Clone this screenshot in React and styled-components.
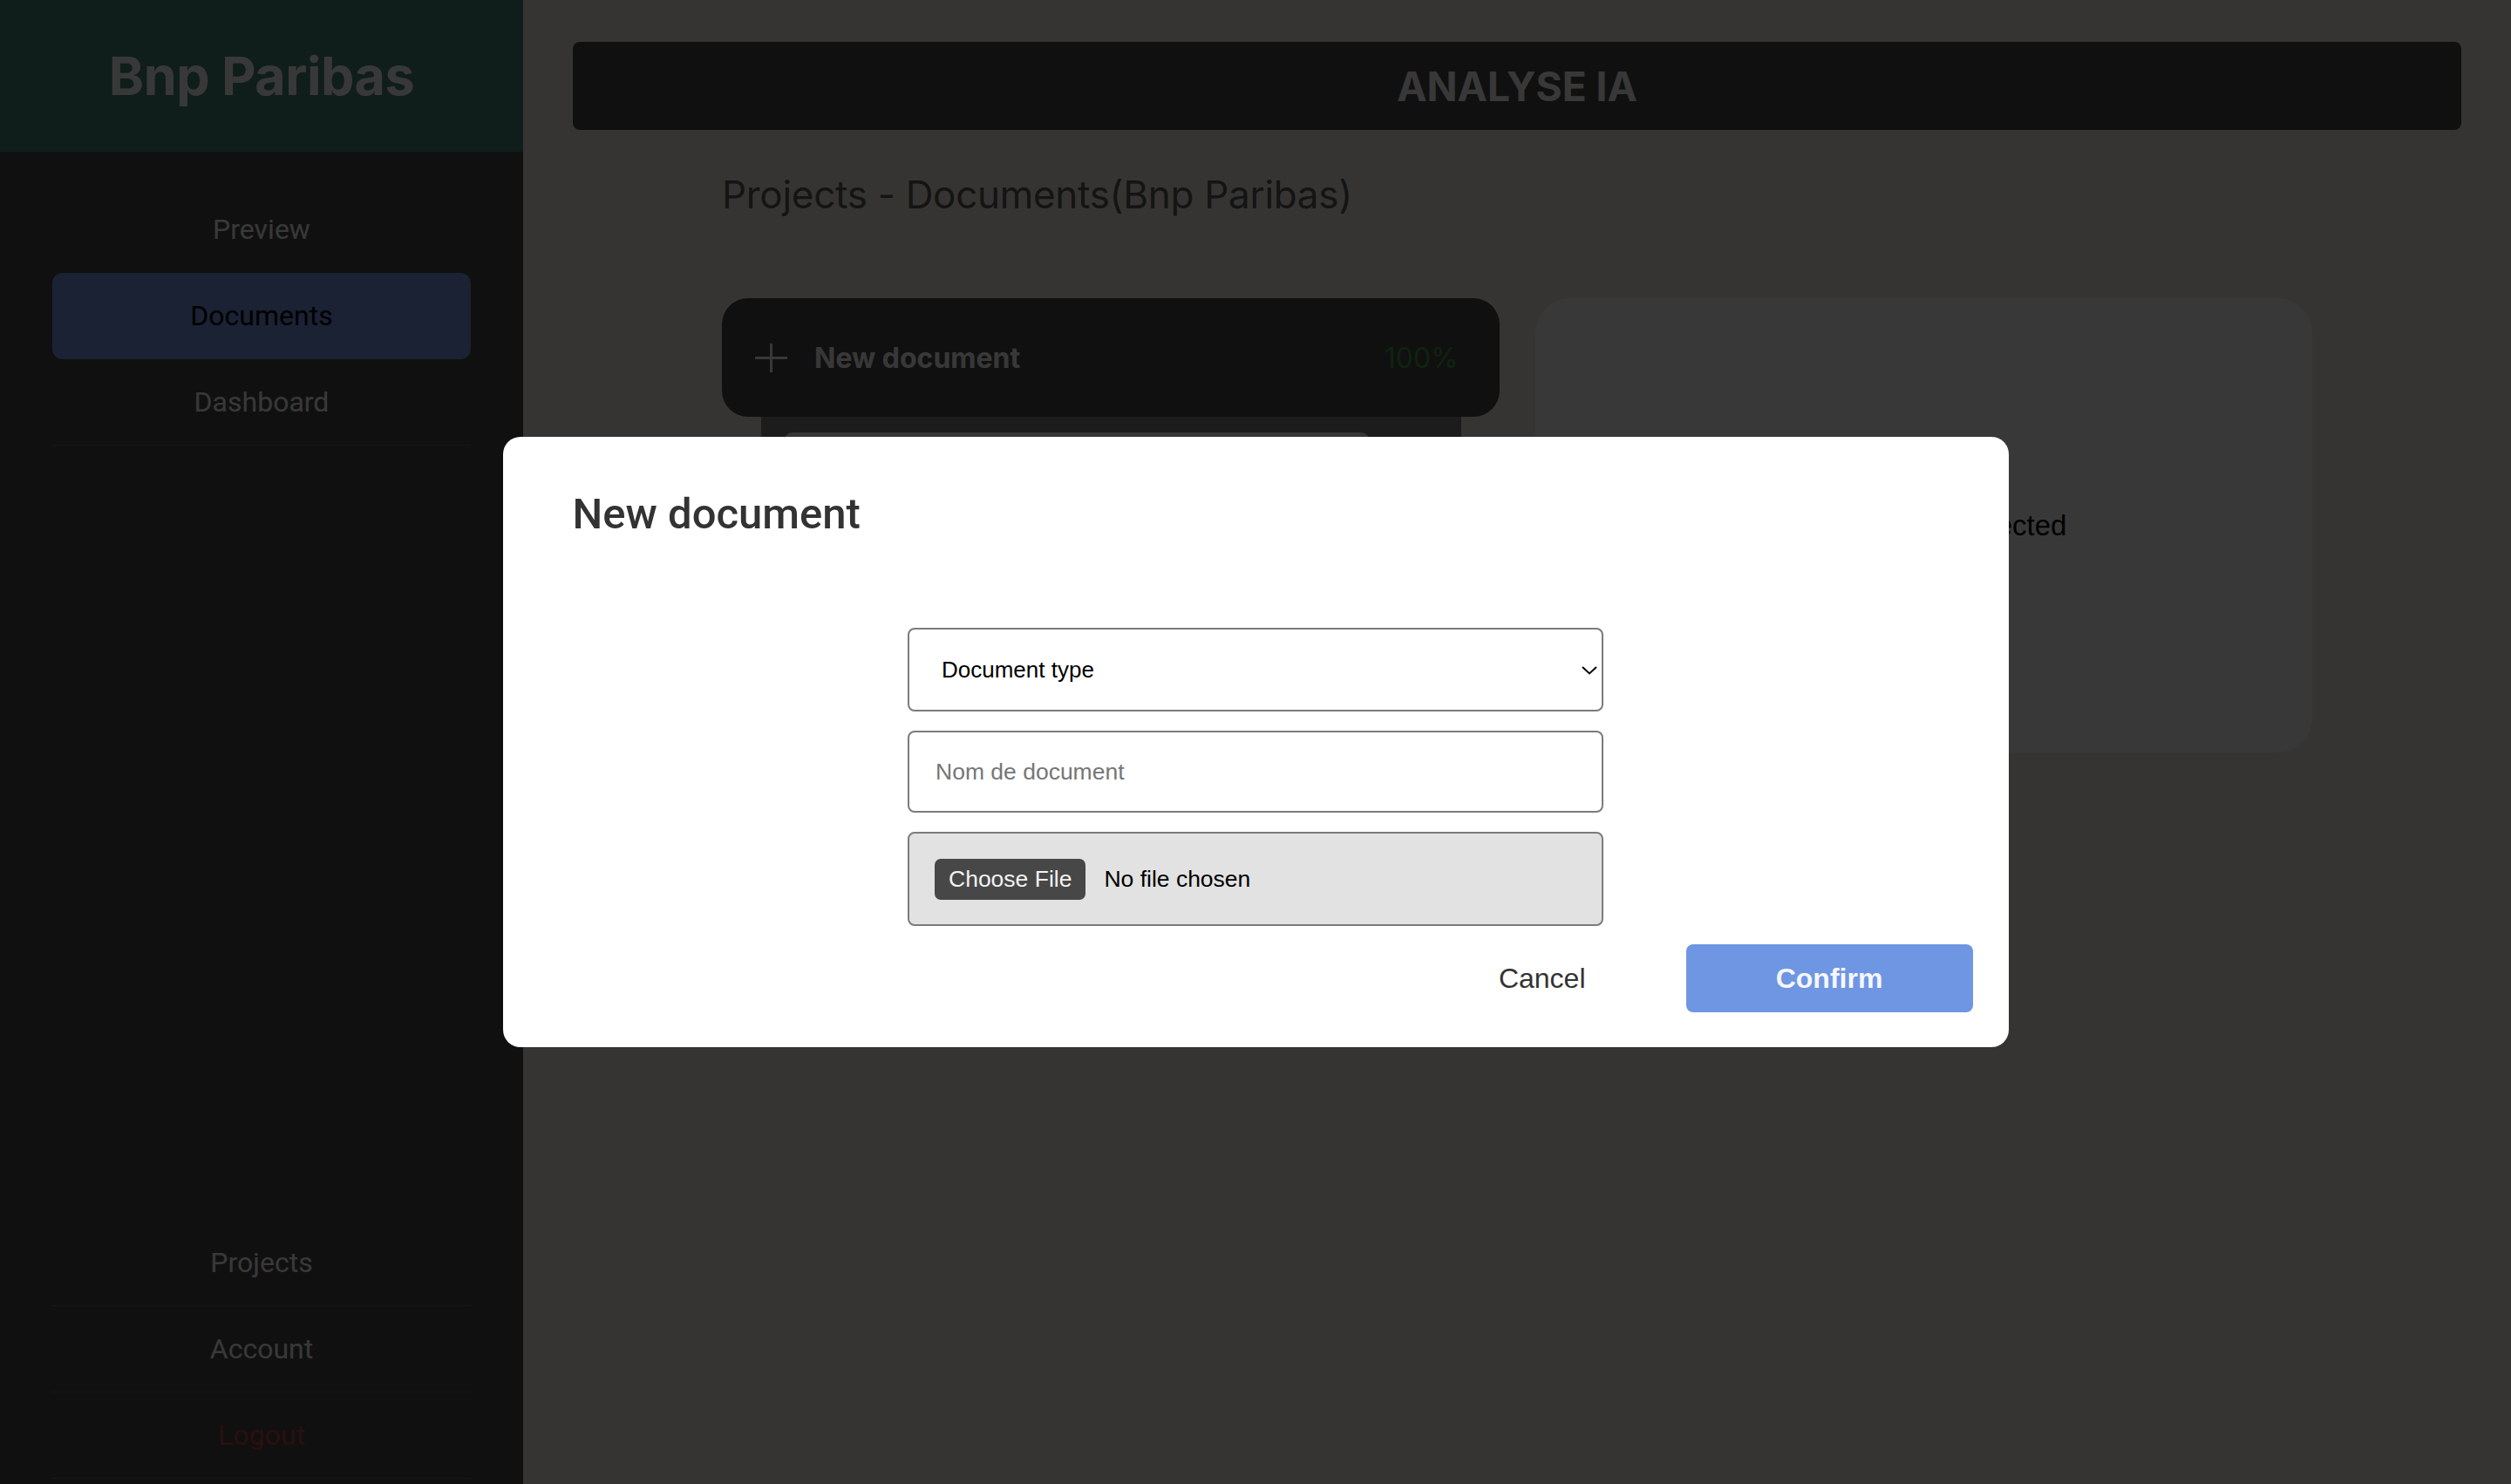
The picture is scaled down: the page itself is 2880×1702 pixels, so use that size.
import React from 'react';
import styled, { createGlobalStyle } from 'styled-components';

const GlobalStyle = createGlobalStyle`
  html, body {
    margin: 0;
    padding: 0;
    height: 100%;
    overflow: hidden;
  }
  * {
    box-sizing: border-box;
  }
`;

const Layout = styled.div`
  display: flex;
  width: 100vw;
  height: 100vh;
  background: #f6ede4;
`;

const Sidebar = styled.aside`
  width: 600px;
  flex-shrink: 0;
  display: flex;
  flex-direction: column;
  background: #4a4a4a;
  padding-bottom: 6px;
`;

const Brand = styled.div`
  height: 174px;
  display: flex;
  align-items: center;
  justify-content: center;
  background: #458a78;
  color: #ffffff;
  font: 700 61px 'Inter', sans-serif;
  letter-spacing: -0.5px;
`;

const NavList = styled.nav`
  display: flex;
  flex-direction: column;
  padding: 40px 60px 0;
`;

const BottomList = styled(NavList)`
  margin-top: auto;
  padding-top: 0;
`;

const NavItem = styled.div`
  height: 99px;
  display: flex;
  align-items: center;
  justify-content: center;
  font: 400 32px 'Roboto', sans-serif;
  color: ${props => (props.$active ? '#000000' : props.$danger ? '#c44545' : '#ffffff')};
  background: ${props => (props.$active ? '#769be8' : 'transparent')};
  border-radius: ${props => (props.$active ? '12px' : '0')};
  border-bottom: 1px solid ${props => (props.$line ? '#656565' : 'transparent')};
`;

const Main = styled.main`
  flex: 1;
  padding: 48px 57px;
  display: flex;
  flex-direction: column;
`;

const TopBar = styled.header`
  height: 101px;
  border-radius: 8px;
  background: #4a4a4a;
  display: flex;
  align-items: center;
  justify-content: center;
  color: #ffffff;
  font: 700 46px 'Inter', sans-serif;
`;

const Content = styled.section`
  padding: 0 171px;
`;

const PageTitle = styled.h1`
  margin: 47px 0 92px;
  font: 400 44px 'Inter', sans-serif;
  color: #5a5a5a;
  letter-spacing: -0.3px;
`;

const Columns = styled.div`
  display: grid;
  grid-template-columns: 1fr 1fr;
  gap: 41px;
  align-items: start;
`;

const Column = styled.div`
  display: flex;
  flex-direction: column;
`;

const NewDocCard = styled.div`
  height: 136px;
  border-radius: 30px;
  background: #4a4a4a;
  display: flex;
  align-items: center;
  gap: 31px;
  padding: 0 47px 0 38px;
  color: #ffffff;
`;

const CardLabel = styled.span`
  font: 700 32px 'Inter', sans-serif;
`;

const Percent = styled.span`
  margin-left: auto;
  font: 400 32px 'Inter', sans-serif;
  color: #45a045;
`;

const DropPanel = styled.div`
  margin: 0 44px 0 45px;
  height: 320px;
  background: #808080;
  padding: 18px 26px;
  display: flex;
  flex-direction: column;
  gap: 14px;
`;

const DropItem = styled.div`
  height: 80px;
  margin-right: 79px;
  border-radius: 10px;
  background: #f5f5f5;
`;

const InfoCard = styled.div`
  height: 521px;
  border-radius: 40px;
  background: #ffffff;
  display: flex;
  align-items: center;
  justify-content: center;
  font: 400 33px 'Liberation Sans', Arial, sans-serif;
  color: #000000;
`;

const Overlay = styled.div`
  position: fixed;
  inset: 0;
  background: rgba(0, 0, 0, 0.78);
  display: flex;
  align-items: center;
  justify-content: center;
`;

const Modal = styled.div`
  width: 1727px;
  background: #ffffff;
  border-radius: 20px;
  padding: 61px 41px 40px;
  display: flex;
  flex-direction: column;
`;

const ModalTitle = styled.h2`
  margin: 0;
  padding-left: 39px;
  font: 500 49px 'Roboto', sans-serif;
  line-height: 56px;
  color: #333333;
`;

const Form = styled.form`
  width: 798px;
  margin: 102px auto 0;
  display: flex;
  flex-direction: column;
  gap: 22px;
`;

const SelectWrap = styled.div`
  position: relative;
`;

const Select = styled.select`
  width: 100%;
  height: 96px;
  appearance: none;
  border: 2px solid #7b7b7b;
  border-radius: 8px;
  background: #ffffff;
  padding: 0 60px 0 37px;
  font: 400 26px 'Liberation Sans', Arial, sans-serif;
  color: #000000;
`;

const Chevron = styled.svg`
  position: absolute;
  right: 7px;
  top: 44px;
  pointer-events: none;
`;

const TextInput = styled.input`
  height: 94px;
  border: 2px solid #7b7b7b;
  border-radius: 8px;
  padding: 0 30px;
  font: 400 26.5px 'Liberation Sans', Arial, sans-serif;
  color: #000000;
  &::placeholder {
    color: #767676;
  }
`;

const FileBox = styled.label`
  height: 108px;
  border: 2px solid #7b7b7b;
  border-radius: 8px;
  background: #e2e2e2;
  padding: 0 29px;
  display: flex;
  align-items: center;
  gap: 21px;
  font: 400 26.5px 'Liberation Sans', Arial, sans-serif;
  color: #000000;
`;

const HiddenFile = styled.input`
  display: none;
`;

const FileButton = styled.span`
  height: 47px;
  padding: 0 16px;
  border-radius: 7px;
  background: #474747;
  color: #f2f2f2;
  display: flex;
  align-items: center;
`;

const Footer = styled.div`
  margin-top: 21px;
  display: flex;
  justify-content: flex-end;
  align-items: center;
`;

const CancelButton = styled.button`
  border: none;
  background: none;
  padding: 0;
  margin-right: 115px;
  font: 400 32px 'Liberation Sans', Arial, sans-serif;
  color: #333333;
  cursor: pointer;
`;

const ConfirmButton = styled.button`
  width: 329px;
  height: 78px;
  border: none;
  border-radius: 8px;
  background: #6f96e3;
  color: #f5f7fc;
  font: 700 32px 'Liberation Sans', Arial, sans-serif;
  cursor: pointer;
`;

function PlusIcon() {
  return (
    <svg width="37" height="37" viewBox="0 0 37 37" fill="none" stroke="currentColor" strokeWidth="3">
      <line x1="18.5" y1="2" x2="18.5" y2="35" />
      <line x1="0" y1="18.5" x2="37" y2="18.5" />
    </svg>
  );
}

export default function App() {
  return (
    <>
      <GlobalStyle />
      <Layout>
        <Sidebar>
          <Brand>Bnp Paribas</Brand>
          <NavList>
            <NavItem>Preview</NavItem>
            <NavItem $active>Documents</NavItem>
            <NavItem $line>Dashboard</NavItem>
          </NavList>
          <BottomList>
            <NavItem $line>Projects</NavItem>
            <NavItem $line>Account</NavItem>
            <NavItem $line $danger>Logout</NavItem>
          </BottomList>
        </Sidebar>

        <Main>
          <TopBar>ANALYSE IA</TopBar>
          <Content>
            <PageTitle>Projects - Documents(Bnp Paribas)</PageTitle>
            <Columns>
              <Column>
                <NewDocCard>
                  <PlusIcon />
                  <CardLabel>New document</CardLabel>
                  <Percent>100%</Percent>
                </NewDocCard>
                <DropPanel>
                  <DropItem />
                  <DropItem />
                  <DropItem />
                </DropPanel>
              </Column>
              <InfoCard>No document selected</InfoCard>
            </Columns>
          </Content>
        </Main>
      </Layout>

      <Overlay>
        <Modal>
          <ModalTitle>New document</ModalTitle>
          <Form onSubmit={e => e.preventDefault()}>
            <SelectWrap>
              <Select defaultValue="">
                <option value="">Document type</option>
                <option value="contract">Contract</option>
                <option value="report">Report</option>
              </Select>
              <Chevron width="18" height="10" viewBox="0 0 18 10" fill="none" stroke="#000" strokeWidth="2">
                <polyline points="1,1 9,8.5 17,1" />
              </Chevron>
            </SelectWrap>
            <TextInput type="text" placeholder="Nom de document" />
            <FileBox>
              <HiddenFile type="file" />
              <FileButton>Choose File</FileButton>
              <span>No file chosen</span>
            </FileBox>
          </Form>
          <Footer>
            <CancelButton type="button">Cancel</CancelButton>
            <ConfirmButton type="button">Confirm</ConfirmButton>
          </Footer>
        </Modal>
      </Overlay>
    </>
  );
}
